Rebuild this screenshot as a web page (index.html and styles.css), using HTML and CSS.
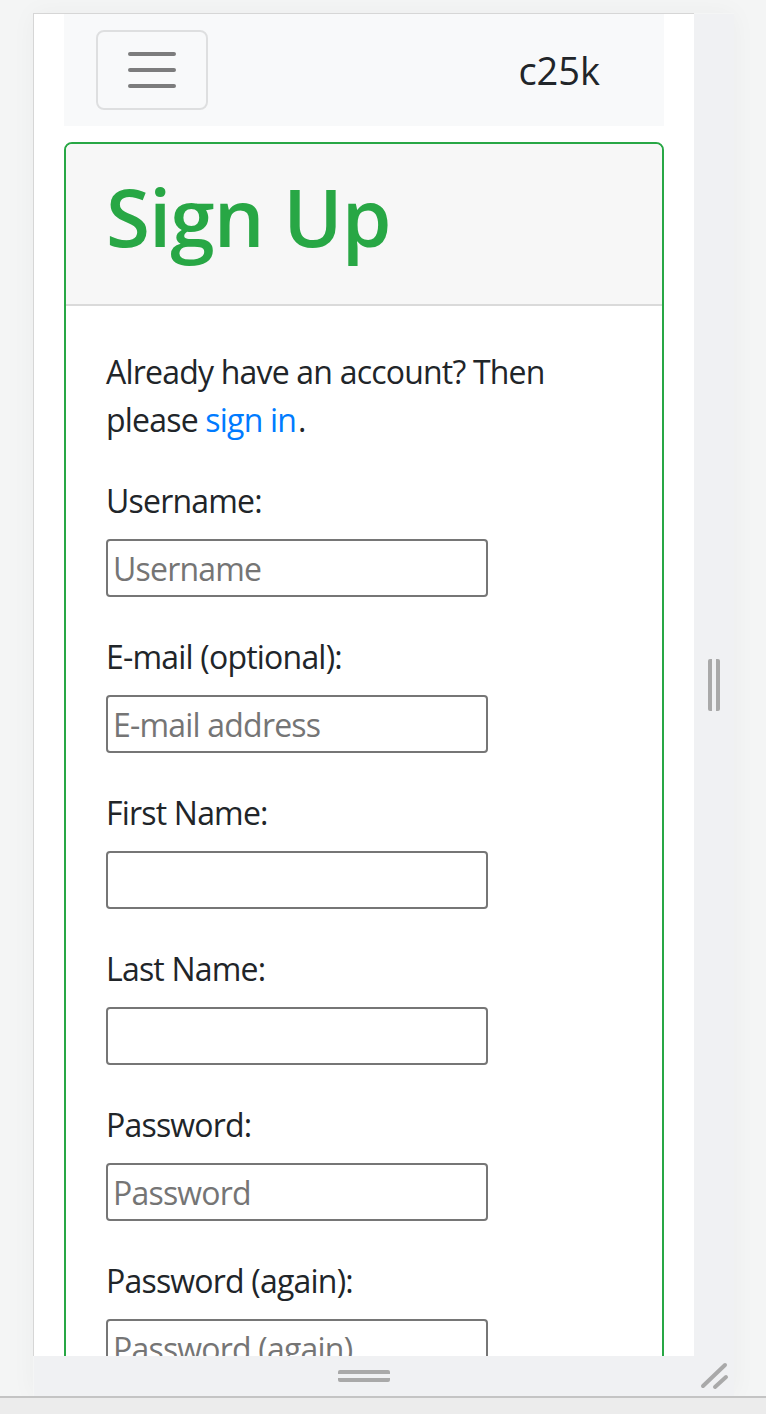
FILE: index.html
```html
<!DOCTYPE html>
<html lang="en">
<head>
<meta charset="utf-8">
<title>c25k - Sign Up</title>
<link rel="stylesheet" href="styles.css">
</head>
<body>
<div class="stage">
  <div class="device">
    <div class="device-row">
      <div class="viewport">
        <div class="page">
          <nav class="navbar">
            <button class="toggler" type="button" aria-label="Toggle navigation">
              <svg class="toggler-icon" viewBox="0 0 30 30" width="60" height="60"><path d="M4 7h22M4 15h22M4 23h22" stroke="rgba(0,0,0,0.5)" stroke-width="2" stroke-linecap="round" fill="none"/></svg>
            </button>
            <a class="brand" href="#">c25k</a>
          </nav>
          <div class="card">
            <div class="card-header"><h1 class="title">Sign Up</h1></div>
            <div class="card-body">
              <p class="intro">Already have an account? Then please <a class="link" href="#">sign in</a>.</p>
              <form class="signup">
                <div class="field"><label class="label" for="u">Username:</label><input class="input" id="u" type="text" placeholder="Username"></div>
                <div class="field"><label class="label" for="e">E-mail (optional):</label><input class="input" id="e" type="email" placeholder="E-mail address"></div>
                <div class="field"><label class="label" for="f">First Name:</label><input class="input" id="f" type="text"></div>
                <div class="field"><label class="label" for="l">Last Name:</label><input class="input" id="l" type="text"></div>
                <div class="field"><label class="label" for="p1">Password:</label><input class="input" id="p1" type="password" placeholder="Password"></div>
                <div class="field"><label class="label" for="p2">Password (again):</label><input class="input" id="p2" type="password" placeholder="Password (again)"></div>
              </form>
            </div>
          </div>
        </div>
      </div>
      <div class="gutter"><span class="vhandle"></span></div>
    </div>
    <div class="bottombar">
      <div class="bottom-main"><span class="hhandle"></span></div>
      <div class="bottom-corner">
        <svg width="40" height="40" viewBox="0 0 40 40"><path d="M9 30L31 9M21 31L32 21" stroke="#a9a9a9" stroke-width="4" stroke-linecap="round" fill="none"/></svg>
      </div>
    </div>
  </div>
</div>
<div class="statusline"></div>
</body>
</html>
```

FILE: styles.css
```css
html, body {
  margin: 0;
  padding: 0;
}
body {
  width: 766px;
  height: 1414px;
  overflow: hidden;
  background: #f4f5f5;
  font-family: "Open Sans", "Noto Sans", sans-serif;
}
.stage {
  padding: 13px 0 0 33px;
}
.device {
  width: 701px;
  box-shadow: 0 0 24px rgba(0, 0, 0, 0.04);
}
.device-row {
  display: flex;
  align-items: flex-end;
}
.viewport {
  width: 660px;
  height: 1342px;
  border-top: 1px solid #d6d6d6;
  border-left: 1px solid #d6d6d6;
  background: #fff;
  overflow: hidden;
}
.gutter {
  width: 40px;
  height: 1342px;
  background: #f0f1f3;
  display: flex;
  align-items: center;
  justify-content: center;
}
.vhandle {
  width: 4px;
  height: 52px;
  border-left: 4px solid #a9a9a9;
  border-right: 4px solid #a9a9a9;
  border-radius: 2px;
}
.bottombar {
  margin-left: 1px;
  width: 700px;
  height: 40px;
  display: flex;
  background: #f0f1f3;
}
.bottom-main {
  width: 660px;
  display: flex;
  align-items: center;
  justify-content: center;
}
.hhandle {
  width: 52px;
  height: 4px;
  border-top: 4px solid #a9a9a9;
  border-bottom: 4px solid #a9a9a9;
  border-radius: 2px;
}
.bottom-corner {
  width: 40px;
  height: 40px;
}
.bottom-corner svg {
  display: block;
}
.statusline {
  height: 16px;
  border-top: 2px solid #c4c4c4;
  background: #ececec;
}

/* page */
.page {
  padding: 0 30px;
  color: #212529;
  font-size: 32px;
  line-height: 48px;
  letter-spacing: -0.8px;
}
.navbar {
  display: flex;
  align-items: center;
  justify-content: space-between;
  padding: 16px 32px;
  background: #f8f9fa;
}
.toggler {
  width: 112px;
  height: 80px;
  padding: 8px 24px;
  border: 2px solid rgba(0, 0, 0, 0.1);
  border-radius: 8px;
  background: transparent;
  box-sizing: border-box;
}
.toggler-icon {
  display: block;
}
.brand {
  margin-right: 32px;
  font-size: 38px;
  line-height: 60px;
  color: #212529;
  text-decoration: none;
  letter-spacing: 0;
}
.card {
  margin-top: 16px;
  border: 2px solid #28a745;
  border-radius: 8px;
  overflow: hidden;
}
.card-header {
  padding: 24px 40px;
  background: #f7f7f7;
  border-bottom: 2px solid #dadada;
}
.title {
  margin: 0 0 16px;
  font-size: 80px;
  line-height: 96px;
  font-weight: 600;
  color: #28a745;
  letter-spacing: -1px;
}
.card-body {
  padding: 42px 40px 40px;
}
.intro {
  margin: 0 0 33px;
}
.link {
  color: #007bff;
  text-decoration: none;
  margin-right: 2px;
}
.field {
  margin-bottom: 36px;
}
.label {
  display: block;
  margin-bottom: 14px;
}
.input {
  display: block;
  width: 382px;
  height: 58px;
  box-sizing: border-box;
  margin: 0;
  padding: 0 5px;
  border: 2px solid #767676;
  border-radius: 4px;
  background: #fff;
  font-family: inherit;
  font-size: 32px;
  letter-spacing: -0.8px;
  color: #212529;
}
.input::placeholder {
  color: #757575;
}
```
